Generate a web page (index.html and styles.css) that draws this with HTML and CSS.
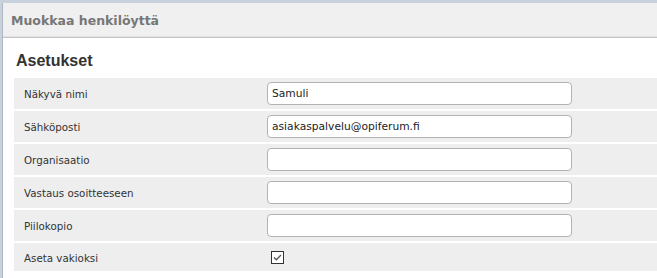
FILE: index.html
```html
<!DOCTYPE html>
<html lang="fi">
  <head>
    <meta charset="UTF-8" />
    <meta name="viewport" content="width=device-width, initial-scale=1.0" />
    <title>Muokkaa henkilöyttä</title>
    <link rel="stylesheet" href="styles.css">
  </head>
  <body>
    <div class="panel">
      <div class="panel-head">Muokkaa henkilöyttä</div>
      <section class="asetukset">
        <h2>Asetukset</h2>
        <div class="rivi">
          <label>Näkyvä nimi</label>
          <input type="text" value="Samuli" />
        </div>
        <div class="rivi">
          <label>Sähköposti</label>
          <input type="text" value="asiakaspalvelu@opiferum.fi" />
        </div>
        <div class="rivi">
          <label>Organisaatio</label>
          <input type="text" value="" />
        </div>
        <div class="rivi">
          <label>Vastaus osoitteeseen</label>
          <input type="text" value="" />
        </div>
        <div class="rivi">
          <label>Piilokopio</label>
          <input type="text" value="" />
        </div>
        <div class="rivi valinta">
          <label>Aseta vakioksi</label>
          <span class="ruutu">
            <svg width="13" height="13" viewBox="0 0 13 13">
              <rect x="0.5" y="0.5" width="12" height="12" fill="#fff" stroke="#333" />
              <path d="M3 6.5 L5.3 8.8 L10 4" fill="none" stroke="#555" stroke-width="1.3" />
            </svg>
          </span>
        </div>
      </section>
    </div>
  </body>
</html>
```

FILE: styles.css
```css
* {
  box-sizing: border-box;
}
html, body {
  height: 278px;
}
body {
  margin: 0;
  background-color: #c9d2dc;
  overflow: hidden;
  font-family: "DejaVu Sans", Verdana, sans-serif;
}
.panel {
  margin: 3px 0 0 2px;
  height: 275px;
  overflow: hidden;
  background-color: #fff;
  border-left: 1px solid #aeb8c3;
}
.panel-head {
  height: 35px;
  line-height: 35px;
  padding-left: 8px;
  background-color: #f0f0f0;
  border-bottom: 1px solid #c4c4c4;
  box-shadow: 0 -1px 0 #e2e2e2 inset;
  color: #777;
  font-size: 12.5px;
  font-weight: bold;
}
.asetukset {
  padding-left: 11px;
}
h2 {
  margin: 14px 0 8px 2px;
  font-family: "Liberation Sans", Arial, sans-serif;
  font-size: 16px;
  line-height: 18px;
  color: #333;
}
.rivi {
  display: grid;
  grid-template-columns: 253px 1fr;
  align-items: center;
  background-color: #eee;
  padding: 4px 0;
  margin-bottom: 2px;
}
.rivi label {
  padding-left: 10px;
  font-size: 10.3px;
  color: #333;
}
.rivi input {
  width: 305px;
  height: 23px;
  padding: 0 4px;
  border: 1px solid #b3b3b3;
  border-radius: 4px;
  font-family: "DejaVu Sans", Verdana, sans-serif;
  font-size: 10.7px;
  color: #222;
  background-color: #fff;
}
.valinta {
  padding: 8px 0 7px;
}
.ruutu {
  display: flex;
  padding-left: 4px;
}
```
